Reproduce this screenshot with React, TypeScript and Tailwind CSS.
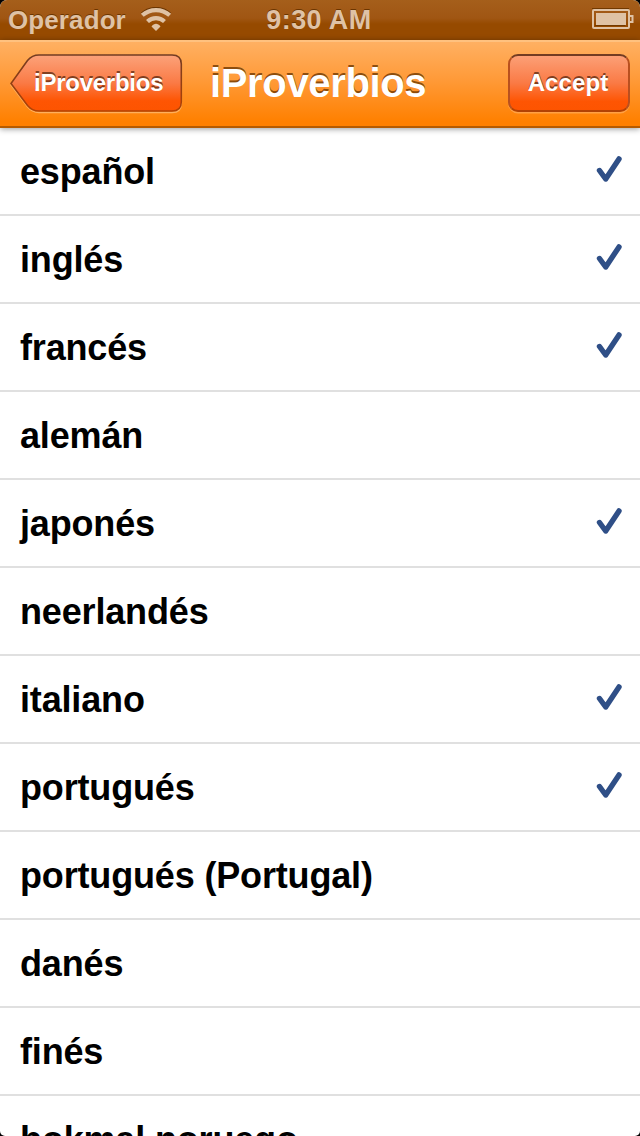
import { useState } from 'react';

const LANGUAGES = [
  { name: 'español', checked: true },
  { name: 'inglés', checked: true },
  { name: 'francés', checked: true },
  { name: 'alemán', checked: false },
  { name: 'japonés', checked: true },
  { name: 'neerlandés', checked: false },
  { name: 'italiano', checked: true },
  { name: 'portugués', checked: true },
  { name: 'portugués (Portugal)', checked: false },
  { name: 'danés', checked: false },
  { name: 'finés', checked: false },
  { name: 'bokmal noruego', checked: false },
];

const BACK_SHAPE = 'M29 1H162Q171.3 1 171.3 10V48Q171.3 57 162 57H29Q22 57 17.5 51.5L1 29.5L17.5 6.5Q22 1 29 1Z';

function WifiIcon() {
  return (
    <svg className="ml-[14px] mt-[7px] h-6 w-8 shrink-0" viewBox="0 0 32 24" fill="none" stroke="#dfc2a5" aria-hidden="true">
      <path d="M2.3 8.3C10 1.3 22 1.3 29.7 8.3" stroke="#6b3500" strokeWidth="3.6" transform="translate(0 -1.4)" />
      <path d="M2.3 8.3C10 1.3 22 1.3 29.7 8.3" strokeWidth="4.2" />
      <path d="M7.5 14.5C12.3 9.9 19.7 9.9 24.5 14.5" strokeWidth="4.2" />
      <path d="M16 24L11.5 19.4C14 16 18 16 20.5 19.4Z" fill="#dfc2a5" stroke="none" />
    </svg>
  );
}

function BatteryIcon() {
  return (
    <svg className="mt-[8px] h-[22px] w-[43px] shrink-0" viewBox="0 0 43 22" fill="none" aria-hidden="true">
      <path d="M1 .5H38M4 17.5H34" stroke="#713900" />
      <rect x="2" y="2" width="36" height="18" rx="1" stroke="#dfc2a5" strokeWidth="2" />
      <rect x="5" y="5" width="30" height="12" fill="#dfc2a5" />
      <path d="M38 8H41.5V14H38" stroke="#dfc2a5" strokeWidth="2" />
    </svg>
  );
}

function StatusBar() {
  return (
    <div className="flex h-10 justify-between bg-[linear-gradient(#a55f1b_0%,#a05613_45%,#964a00_60%,#964a00_100%)] text-[26px] leading-10 font-bold text-[#dfc2a5] [text-shadow:0_-1.5px_0_#6b3500]">
      <div className="flex w-[250px] pl-[8px]">
        <span className="tracking-[0.1px]">Operador</span>
        <WifiIcon />
      </div>
      <span className="pr-[2px] text-[27px] leading-[41px] tracking-[0.4px]">9:30 AM</span>
      <div className="flex w-[250px] justify-end pr-[6px]">
        <BatteryIcon />
      </div>
    </div>
  );
}

function BackButton() {
  return (
    <button type="button" className="relative h-[60px] w-[173px]">
      <svg className="absolute inset-0 h-[60px] w-[173px]" viewBox="0 0 173 60" aria-hidden="true">
        <defs>
          <linearGradient id="backFill" x1="0" y1="0" x2="0" y2="1">
            <stop offset="0" stopColor="#fca27a" />
            <stop offset=".5" stopColor="#fa7a45" />
            <stop offset=".82" stopColor="#fe5503" />
            <stop offset="1" stopColor="#fd5400" />
          </linearGradient>
          <linearGradient id="backStroke" x1="0" y1="0" x2="0" y2="1">
            <stop offset="0" stopColor="#733c22" />
            <stop offset="1" stopColor="#b24204" />
          </linearGradient>
        </defs>
        <path d={BACK_SHAPE} fill="none" stroke="#ffb05c" strokeWidth="1.5" transform="translate(0 1.4)" />
        <path d={BACK_SHAPE} fill="url(#backFill)" stroke="url(#backStroke)" strokeWidth="1.6" />
      </svg>
      <span className="absolute top-0 left-[24px] text-[24px] leading-[58px] font-bold tracking-[-0.25px] text-white [text-shadow:0_-2px_0_rgba(90,40,15,0.75)]">
        iProverbios
      </span>
    </button>
  );
}

function NavBar() {
  return (
    <div className="relative z-10 flex h-[88px] items-start border-t-2 border-b-2 border-t-[#ffc17f] border-b-[#b65b00] bg-[linear-gradient(#ffb062_0%,#ff9a38_45%,#ff8000_95%)] px-[10px] pt-[12px] shadow-[0_1px_6px_rgba(0,0,0,0.4)]">
      <BackButton />
      <h1 className="ml-[27px] text-[40px] leading-[58px] font-bold tracking-[-0.35px] whitespace-nowrap text-white [text-shadow:0_-2px_0_rgba(110,55,0,0.8)]">
        iProverbios
      </h1>
      <button
        type="button"
        className="ml-auto h-[58px] w-[122px] rounded-[10px] border-2 border-x-[#b9501f] border-t-[#733c22] border-b-[#b24204] bg-[linear-gradient(#fca27a_0%,#fa7a45_50%,#fe5503_82%,#fd5400_100%)] bg-origin-border pr-[2px] text-[24px] leading-[54px] font-bold tracking-[0.1px] text-white shadow-[0_1.5px_0_rgba(255,196,139,0.45)] [text-shadow:0_-2px_0_rgba(90,40,15,0.75)]"
      >
        Accept
      </button>
    </div>
  );
}

function Checkmark() {
  return (
    <svg className="mt-[26px] h-8 w-8 shrink-0" viewBox="0 0 32 32" fill="none" aria-hidden="true">
      <path d="M7.5 16.5L13.7 25L27 4.9" stroke="#2f4f87" strokeWidth="5.4" strokeLinecap="round" strokeLinejoin="round" />
    </svg>
  );
}

export default function App() {
  const [languages, setLanguages] = useState(LANGUAGES);

  const toggle = (name: string) => {
    setLanguages(languages.map((l) => (l.name === name ? { ...l, checked: !l.checked } : l)));
  };

  return (
    <div className="h-[1136px] w-[640px] overflow-hidden bg-black font-['Liberation_Sans',Arial,sans-serif]">
      <div className="h-full overflow-hidden rounded-t-[7px] rounded-b-[5px] bg-white">
        <StatusBar />
        <NavBar />
        <ul>
          {languages.map((l) => (
            <li
              key={l.name}
              className="flex h-[88px] justify-between border-b-2 border-[#e0e0e0] pr-[16px] pl-[20px] text-[36px] leading-[88px] font-bold tracking-[-0.16px] text-black"
              onClick={() => toggle(l.name)}
            >
              <span>{l.name}</span>
              {l.checked && <Checkmark />}
            </li>
          ))}
        </ul>
      </div>
    </div>
  );
}
